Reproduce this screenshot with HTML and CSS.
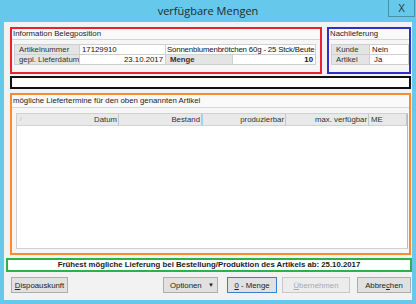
FILE: index.html
```html
<!DOCTYPE html>
<html lang="de">
<head>
  <meta charset="UTF-8">
  <title>verfügbare Mengen</title>
  <link rel="stylesheet" href="styles.css">
</head>
<body>
  <div class="window">
    <div class="titlebar">
      <span></span>
      <span class="title">verfügbare Mengen</span>
      <span class="close-wrap"><button class="close">X</button></span>
    </div>

    <div class="client">
      <div class="top-row">
        <div class="box box-red">
          <div class="caption">Information Belegposition</div>
          <div class="group-body">
            <table class="info">
              <colgroup>
                <col class="w-label">
                <col class="w-value">
                <col class="w-menge">
                <col>
              </colgroup>
              <tr>
                <td class="label">Artikelnummer</td>
                <td class="value">17129910</td>
                <td class="value desc" colspan="2">Sonnenblumenbrötchen 60g - 25 Stck/Beute</td>
              </tr>
              <tr>
                <td class="label">gepl. Lieferdatum</td>
                <td class="value right">23.10.2017</td>
                <td class="label bold">Menge</td>
                <td class="value right bold">10</td>
              </tr>
            </table>
          </div>
        </div>

        <div class="box box-blue">
          <div class="caption">Nachlieferung</div>
          <div class="group-body">
            <table class="info">
              <colgroup>
                <col class="w-kunde">
                <col>
              </colgroup>
              <tr>
                <td class="label">Kunde</td>
                <td class="value">Nein</td>
              </tr>
              <tr>
                <td class="label">Artikel</td>
                <td class="value indent">Ja</td>
              </tr>
            </table>
          </div>
        </div>
      </div>

      <div class="box box-black"></div>

      <div class="box box-orange">
        <div class="caption">mögliche Liefertermine für den oben genannten Artikel</div>
        <div class="list-body">
          <div class="listview">
            <div class="list-header">
              <div class="col col-datum"><span class="sort">/</span><span>Datum</span></div>
              <div class="col col-bestand">Bestand</div>
              <div class="col col-prod">produzierbar</div>
              <div class="col col-max">max. verfügbar</div>
              <div class="col col-me">ME</div>
            </div>
          </div>
        </div>
      </div>

      <div class="box box-green">Frühest mögliche Lieferung bei Bestellung/Produktion des Artikels ab: 25.10.2017</div>

      <div class="buttons">
        <button class="btn btn-dispo"><u>D</u>ispoauskunft</button>
        <button class="btn btn-opt"><span>Optionen</span><span class="arrow">&#9660;</span></button>
        <button class="btn btn-menge default"><u>0</u> - Menge</button>
        <button class="btn btn-take" disabled><u>Ü</u>bernehmen</button>
        <button class="btn btn-cancel">Abbre<u>c</u>hen</button>
      </div>
    </div>
  </div>
</body>
</html>
```

FILE: styles.css
```css
* {
  box-sizing: border-box;
}
body {
  margin: 0;
  background-color: #66c8ea;
  font-family: "Liberation Sans", Arial, sans-serif;
  font-size: 8px;
  color: #111;
}
.window {
  width: 416px;
  height: 304px;
  display: flex;
  flex-direction: column;
  padding: 0 4px 4px 4px;
}
.titlebar {
  height: 22px;
  display: grid;
  grid-template-columns: 1fr auto 1fr;
  align-items: start;
}
.title {
  font-family: "Open Sans", "Noto Sans", sans-serif;
  font-size: 11px;
  line-height: 22px;
  color: #1e2a30;
}
.close-wrap {
  display: flex;
  justify-content: flex-end;
  margin-right: -3px;
}
.close {
  width: 27px;
  height: 17px;
  background-color: #66c8ea;
  border: 1px solid #4a8fa8;
  border-top: none;
  font-family: "Liberation Sans", Arial, sans-serif;
  font-size: 10px;
  color: #2b3a40;
  padding: 0;
}
.client {
  flex: 1;
  background-color: #f2f2f2;
  padding: 5px 1px 0 0;
  display: flex;
  flex-direction: column;
}
.top-row {
  display: flex;
  gap: 5px;
  height: 47px;
  margin-left: 6px;
}
.box {
  border: 2px solid;
}
.box-red {
  width: 312px;
  border-color: #e8232b;
  display: flex;
  flex-direction: column;
}
.box-blue {
  width: 84px;
  border-color: #3030c8;
  display: flex;
  flex-direction: column;
}
.caption {
  height: 10px;
  line-height: 9px;
  padding-left: 1px;
  font-size: 7.8px;
  color: #222;
  background-color: #fafafa;
}
.group-body {
  flex: 1;
  border-top: 1px solid #d4d4d4;
  padding: 4px 4px 0 2px;
  background-color: #f6f6f6;
}
.box-blue .group-body {
  padding: 4px 0 0 2px;
}
.info {
  border-collapse: collapse;
  table-layout: fixed;
  width: 100%;
}
.info td {
  height: 10px;
  padding: 0 2px;
  border: 1px solid #cfcfcf;
  font-size: 7.8px;
  line-height: 8px;
  white-space: nowrap;
  overflow: hidden;
}
.info .desc {
  padding: 0 1px;
  letter-spacing: -0.15px;
}
.info .label {
  background-color: #e4e4e4;
  color: #333;
  padding-left: 4px;
}
.info .value {
  background-color: #fff;
}
.w-label {
  width: 65px;
}
.w-value {
  width: 86px;
}
.w-menge {
  width: 67px;
}
.w-kunde {
  width: 38px;
}
.right {
  text-align: right;
}
.bold {
  font-weight: bold;
}
.indent {
  padding-left: 4px !important;
}
.box-black {
  height: 13px;
  margin: 2px 0 0 6px;
  width: 401px;
  border-color: #111;
  background-color: #fff;
}
.box-orange {
  height: 162px;
  margin: 4px 0 0 6px;
  width: 401px;
  border-color: #ff8a2a;
  display: flex;
  flex-direction: column;
}
.box-orange .caption {
  height: 12px;
  line-height: 11px;
}
.list-body {
  flex: 1;
  border-top: 1px solid #d8d8d8;
  padding: 5px 1px 4px 4px;
  background-color: #f6f6f6;
  display: flex;
}
.listview {
  flex: 1;
  background-color: #fff;
  border: 1px solid #d0d0d0;
  border-right-color: #b8b8b8;
}
.list-header {
  display: flex;
  height: 12px;
  background-color: #e9e9e9;
}
.col {
  border-right: 1px solid #c6c6c6;
  border-bottom: 1px solid #d2d2d2;
  font-size: 7.8px;
  line-height: 11px;
  padding: 0 1px;
  text-align: right;
  color: #333;
}
.col-datum {
  width: 102px;
  display: flex;
  justify-content: space-between;
}
.sort {
  color: #b0b0b0;
  padding-left: 2px;
  font-size: 6px;
}
.col-bestand {
  width: 84px;
  border-right: 2px solid #9fd3ee;
}
.col-prod {
  width: 83px;
}
.col-max {
  width: 83px;
}
.col-me {
  flex: 1;
  text-align: left;
  padding-left: 2px;
}
.box-green {
  height: 14px;
  margin: 3px 0 0 2px;
  width: 406px;
  border-color: #2eb04a;
  background-color: #fff;
  text-align: center;
  font-weight: bold;
  font-size: 7.8px;
  line-height: 10px;
  color: #1a1a1a;
}
.buttons {
  display: flex;
  margin-top: 5px;
  padding-left: 7px;
}
.btn {
  height: 16px;
  background-color: #e1e1e1;
  border: 1px solid #adadad;
  font-family: "Liberation Sans", Arial, sans-serif;
  font-size: 7.8px;
  color: #222;
  padding: 0;
}
.btn-dispo {
  width: 57px;
}
.btn-opt {
  width: 55px;
  margin-left: auto;
  display: flex;
  align-items: center;
  justify-content: space-between;
  padding: 0 3px 0 6px;
}
.arrow {
  font-size: 6px;
}
.btn-menge {
  width: 50px;
  margin-left: 9px;
}
.default {
  border-color: #3a80c4;
}
.btn-take {
  width: 68px;
  margin-left: 5px;
  color: #a8a8a8;
  background-color: #ececec;
  border-color: #c8c8c8;
}
.btn-cancel {
  width: 54px;
  margin-left: 7px;
}
```
